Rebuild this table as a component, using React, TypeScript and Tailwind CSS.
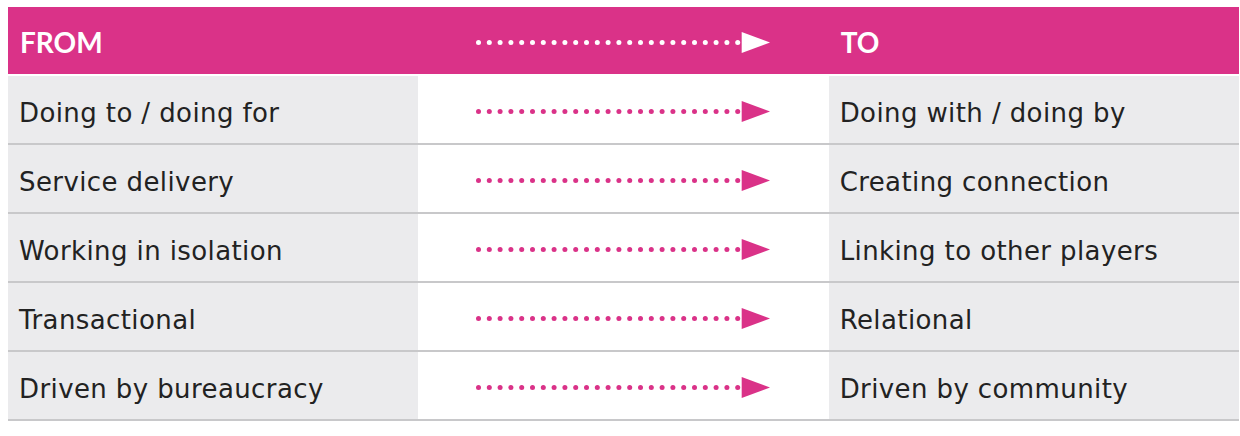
const rows: [string, string][] = [
  ['Doing to / doing for', 'Doing with / doing by'],
  ['Service delivery', 'Creating connection'],
  ['Working in isolation', 'Linking to other players'],
  ['Transactional', 'Relational'],
  ['Driven by bureaucracy', 'Driven by community'],
];

function Arrow({ color }: { color: string }) {
  const dots = Array.from({ length: 25 }, (_, i) => 2.5 + i * 10.8);
  return (
    <svg width="294" height="21" viewBox="0 0 294 21" className="block">
      {dots.map((cx, i) => (
        <circle key={i} cx={cx} cy={10.5} r={2.5} fill={color} />
      ))}
      <polygon points="265.7,0 294,10.5 265.7,21" fill={color} />
    </svg>
  );
}

export default function App() {
  return (
    <div className="w-[1240px] h-[436px] bg-white pt-[7px] pl-[8px]">
      <div className="w-[1231px]">
        <div className="grid grid-cols-3 h-[67px] bg-[#da3288] text-white mb-[2px]" style={{ fontFamily: 'Lato, sans-serif' }}>
          <div className="flex items-center pl-[12px] pt-[3px] text-[28px] font-bold">FROM</div>
          <div className="flex items-center justify-center pt-[3px]">
            <Arrow color="#ffffff" />
          </div>
          <div className="flex items-center pl-[12px] pt-[3px] text-[28px] font-bold">TO</div>
        </div>
        {rows.map(([from, to], i) => (
          <div
            key={i}
            className="grid grid-cols-3 h-[69px] border-b-2 border-[#c8c8ca] text-[#222222] text-[26px] tracking-[0.4px]"
            style={{ fontFamily: '"DejaVu Sans", sans-serif' }}
          >
            <div className="flex items-center pl-[11px] pt-[7px] bg-[#ebebed]">{from}</div>
            <div className="flex items-center justify-center pt-[3px] bg-white">
              <Arrow color="#da3288" />
            </div>
            <div className="flex items-center pl-[11px] pt-[7px] bg-[#ebebed]">{to}</div>
          </div>
        ))}
      </div>
    </div>
  );
}
